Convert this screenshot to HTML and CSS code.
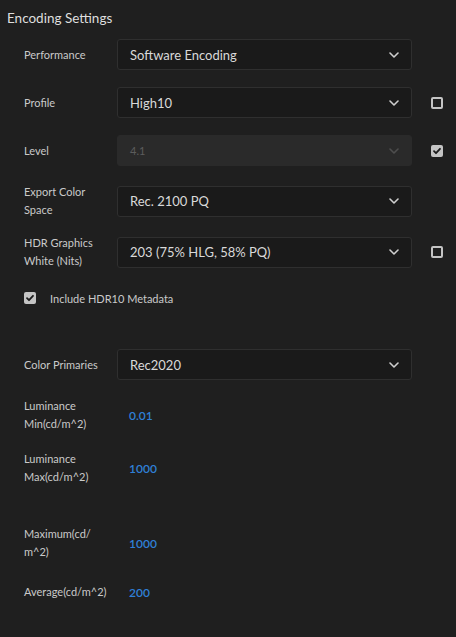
FILE: index.html
```html
<!DOCTYPE html>
<html>
<head>
<meta charset="utf-8">
<link rel="stylesheet" href="styles.css">
</head>
<body>
<div class="panel">
  <div class="title">Encoding Settings</div>
  <div class="rows">
    <div class="row">
      <div class="label">Performance</div>
      <div class="select"><span>Software Encoding</span><svg class="chev" viewBox="0 0 10 6"><path d="M1 1l4 4 4-4"/></svg></div>
      <div class="cbcell"></div>
    </div>
    <div class="row">
      <div class="label">Profile</div>
      <div class="select"><span>High10</span><svg class="chev" viewBox="0 0 10 6"><path d="M1 1l4 4 4-4"/></svg></div>
      <div class="cbcell"><span class="cb"></span></div>
    </div>
    <div class="row">
      <div class="label">Level</div>
      <div class="select disabled"><span>4.1</span><svg class="chev" viewBox="0 0 10 6"><path d="M1 1l4 4 4-4"/></svg></div>
      <div class="cbcell"><span class="cb on"><svg viewBox="0 0 12 12"><path d="M3 6.2l2 2 4-4.4"/></svg></span></div>
    </div>
    <div class="row tall">
      <div class="label">Export Color Space</div>
      <div class="select"><span>Rec. 2100 PQ</span><svg class="chev" viewBox="0 0 10 6"><path d="M1 1l4 4 4-4"/></svg></div>
      <div class="cbcell"></div>
    </div>
    <div class="row tall r5">
      <div class="label">HDR Graphics White (Nits)</div>
      <div class="select"><span>203 (75% HLG, 58% PQ)</span><svg class="chev" viewBox="0 0 10 6"><path d="M1 1l4 4 4-4"/></svg></div>
      <div class="cbcell"><span class="cb"></span></div>
    </div>
    <div class="check-row">
      <span class="cb on"><svg viewBox="0 0 12 12"><path d="M3 6.2l2 2 4-4.4"/></svg></span>
      <span class="check-label">Include HDR10 Metadata</span>
    </div>
    <div class="row primaries">
      <div class="label">Color Primaries</div>
      <div class="select"><span>Rec2020</span><svg class="chev" viewBox="0 0 10 6"><path d="M1 1l4 4 4-4"/></svg></div>
      <div class="cbcell"></div>
    </div>
    <div class="row tall vrow">
      <div class="label">Luminance Min(cd/m^2)</div>
      <div class="value">0.01</div>
    </div>
    <div class="row tall vrow">
      <div class="label">Luminance Max(cd/m^2)</div>
      <div class="value">1000</div>
    </div>
    <div class="row tall vrow maximum">
      <div class="label">Maximum(cd/ m^2)</div>
      <div class="value">1000</div>
    </div>
    <div class="row vrow average">
      <div class="label">Average(cd/m^2)</div>
      <div class="value">200</div>
    </div>
  </div>
</div>
</body>
</html>
```

FILE: styles.css
```css
html, body {
  margin: 0;
  padding: 0;
  background: #1f1f1f;
}
body {
  width: 456px;
  height: 637px;
  overflow: hidden;
  font-family: Lato, "Open Sans", sans-serif;
  color: #cfcfcf;
}
.panel {
  padding: 9px 0 0 7px;
}
.title {
  font-size: 13.5px;
  color: #dedede;
  line-height: 18px;
  height: 18px;
}
.rows {
  display: flex;
  flex-direction: column;
  gap: 17px;
  padding-left: 17px;
  margin-top: 12px;
}
.row {
  display: flex;
  align-items: center;
  min-height: 31px;
}
.row.tall {
  min-height: 36px;
}
.row.r5 {
  margin-top: -2px;
}
.label {
  width: 93px;
  font-size: 11px;
  line-height: 18px;
  color: #cacaca;
  padding-right: 6px;
  box-sizing: border-box;
}
.select {
  width: 295px;
  height: 31px;
  box-sizing: border-box;
  background: #1a1a1a;
  border: 1px solid #2f2f2f;
  border-radius: 3px;
  display: flex;
  align-items: center;
  justify-content: space-between;
  padding: 0 12px 0 12px;
  font-size: 13px;
  color: #d9d9d9;
}
.select.disabled {
  background: #2a2a2a;
  border-color: #2a2a2a;
  color: #5c5c5c;
  font-size: 11px;
}
.chev {
  width: 10px;
  height: 6px;
  fill: none;
  stroke: #cfcfcf;
  stroke-width: 1.6;
  stroke-linecap: round;
  stroke-linejoin: round;
}
.select.disabled .chev {
  stroke: #4e4e4e;
}
.cbcell {
  width: 31px;
  display: flex;
  justify-content: flex-end;
}
.cb {
  width: 12px;
  height: 12px;
  box-sizing: border-box;
  border: 2px solid #c4c4c4;
  border-radius: 2px;
  display: inline-block;
}
.cb.on {
  background: #c4c4c4;
  border: none;
}
.cb svg {
  display: block;
  width: 12px;
  height: 12px;
  fill: none;
  stroke: #1b1b1b;
  stroke-width: 1.8;
  stroke-linecap: round;
  stroke-linejoin: round;
}
.check-row {
  display: flex;
  align-items: center;
  height: 18px;
  margin-top: 2px;
}
.check-label {
  margin-left: 14px;
  font-size: 11px;
  color: #cacaca;
}
.primaries {
  margin-top: 25px;
}
.value {
  padding-left: 12px;
  font-size: 12px;
  color: #2f7fd6;
  font-weight: 600;
}
.vrow {
  min-height: 36px;
}
.maximum {
  margin-top: 22px;
}
.average {
  min-height: 18px;
  margin-top: 5px;
}
```
